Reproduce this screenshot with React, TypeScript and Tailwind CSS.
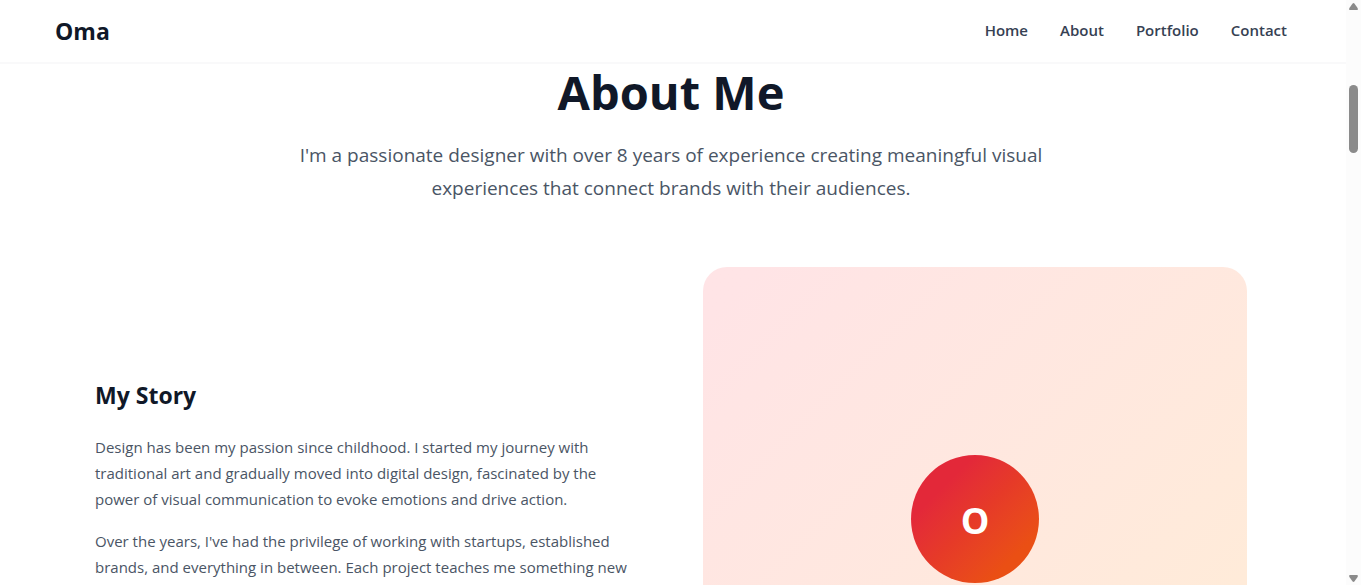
const links = ["Home", "About", "Portfolio", "Contact"];

function Header() {
  return (
    <header className="h-16 shrink-0 border-b-2 border-[#f9f9fa] bg-white pr-1">
      <div className="mx-auto flex h-full max-w-7xl items-center justify-between px-6">
        <a href="#home" className="text-[23px] leading-8 font-bold">
          Oma
        </a>
        <nav className="flex gap-8 pb-0.5 text-[15px] leading-6 font-semibold text-gray-700">
          {links.map((label) => (
            <a key={label} href={`#${label.toLowerCase()}`}>
              {label}
            </a>
          ))}
        </nav>
      </div>
    </header>
  );
}

function About() {
  return (
    <main id="about" className="px-6 pt-1 pr-7">
      <div className="mx-auto max-w-6xl">
        <div className="text-center">
          <h1 className="text-[47px] leading-12 font-bold">About Me</h1>
          <p className="mx-auto mt-[23px] max-w-3xl text-[19px] leading-[33px] text-gray-600">
            I'm a passionate designer with over 8 years of experience creating meaningful visual
            experiences that connect brands with their audiences.
          </p>
        </div>
        <div className="mt-[62px] grid grid-cols-2 gap-16">
          <section className="pt-28">
            <h2 className="text-[23px] leading-8 font-bold">My Story</h2>
            <div className="mt-[23px] space-y-4 text-[15px] leading-[26px] text-gray-600">
              <p>
                Design has been my passion since childhood. I started my journey with traditional
                art and gradually moved into digital design, fascinated by the power of visual
                communication to evoke emotions and drive action.
              </p>
              <p>
                Over the years, I've had the privilege of working with startups, established
                brands, and everything in between. Each project teaches me something new
              </p>
            </div>
          </section>
          <div className="flex aspect-square items-start justify-center rounded-3xl bg-linear-to-br from-[#ffe4e6] from-5% to-[#ffedd5] pt-[188px]">
            <div className="flex size-32 items-center justify-center rounded-full bg-linear-to-br from-[#e32839] from-25% via-[#e63a28] to-[#ea4f14] to-80% pt-1 text-4xl font-bold text-white">
              O
            </div>
          </div>
        </div>
      </div>
    </main>
  );
}

function ScrollRail() {
  return (
    <div aria-hidden="true" className="flex w-[15px] shrink-0 flex-col items-center bg-[#fcfcfc] pt-[3px] pb-[3px]">
      <svg width="9" height="7" viewBox="0 0 9 7" fill="#8b8b8b">
        <path d="M3.6.5Q4.5-.3 5.4.5L8.6 5Q9.3 7 8 7H1Q-.3 7 .4 5Z" />
      </svg>
      <div className="mt-[75px] h-[68px] w-[9px] rounded-full bg-[#8b8b8b]" />
      <svg className="mt-auto" width="9" height="7" viewBox="0 0 9 7" fill="#8b8b8b">
        <path d="M3.6 6.5Q4.5 7.3 5.4 6.5L8.6 2Q9.3 0 8 0H1Q-.3 0 .4 2Z" />
      </svg>
    </div>
  );
}

export default function App() {
  return (
    <div className="flex h-screen overflow-hidden bg-white font-['Open_Sans','Noto_Sans',sans-serif] text-gray-900">
      <div className="flex min-w-0 flex-1 flex-col overflow-hidden">
        <Header />
        <About />
      </div>
      <ScrollRail />
    </div>
  );
}
